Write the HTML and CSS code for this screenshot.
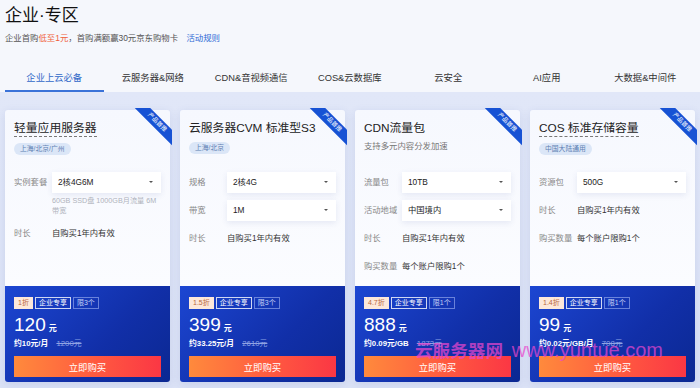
FILE: index.html
```html
<!DOCTYPE html>
<html lang="zh-CN">
<head>
  <meta charset="UTF-8" />
  <title>企业·专区</title>
  <link rel="stylesheet" href="styles.css">
</head>
<body>
  <header class="head">
    <h1>企业·专区</h1>
    <p class="sub">企业首购<em>低至1元</em>，首购满额赢30元京东购物卡 <a href="#">活动规则</a></p>
  </header>

  <nav class="tabs">
    <span class="tab active">企业上云必备</span>
    <span class="tab">云服务器&amp;网络</span>
    <span class="tab">CDN&amp;音视频通信</span>
    <span class="tab">COS&amp;云数据库</span>
    <span class="tab">云安全</span>
    <span class="tab">AI应用</span>
    <span class="tab">大数据&amp;中间件</span>
  </nav>

  <section class="cards">
    <div class="card">
      <div class="ribbon"><span>产品首推</span></div>
      <div class="card-top">
        <div class="card-head">
          <h2 class="dashed">轻量应用服务器</h2>
          <div><span class="region">上海/北京/广州</span></div>
        </div>
        <div class="row">
          <span class="label">实例套餐</span>
          <div class="control">
            <div class="select">2核4G6M</div>
            <p class="desc">60GB SSD盘 1000GB月流量 6M 带宽</p>
          </div>
        </div>
        <div class="row">
          <span class="label">时长</span>
          <span class="value">自购买1年内有效</span>
        </div>
      </div>
      <div class="card-bottom">
        <div class="badges"><span class="off">1折</span><span class="excl">企业专享</span><span class="limit">限3个</span></div>
        <div class="price">120<small>元</small></div>
        <div class="per">约10元/月 <s>1200元</s></div>
        <button class="buy">立即购买</button>
      </div>
    </div>

    <div class="card">
      <div class="ribbon"><span>产品首推</span></div>
      <div class="card-top">
        <div class="card-head">
          <h2>云服务器CVM 标准型S3</h2>
          <div><span class="region">上海/北京</span></div>
        </div>
        <div class="row">
          <span class="label">规格</span>
          <div class="control"><div class="select">2核4G</div></div>
        </div>
        <div class="row">
          <span class="label">带宽</span>
          <div class="control"><div class="select">1M</div></div>
        </div>
        <div class="row">
          <span class="label">时长</span>
          <span class="value">自购买1年内有效</span>
        </div>
      </div>
      <div class="card-bottom">
        <div class="badges"><span class="off">1.5折</span><span class="excl">企业专享</span><span class="limit">限3个</span></div>
        <div class="price">399<small>元</small></div>
        <div class="per">约33.25元/月 <s>2610元</s></div>
        <button class="buy">立即购买</button>
      </div>
    </div>

    <div class="card">
      <div class="ribbon"><span>产品首推</span></div>
      <div class="card-top">
        <div class="card-head">
          <h2>CDN流量包</h2>
          <p class="note">支持多元内容分发加速</p>
        </div>
        <div class="row">
          <span class="label">流量包</span>
          <div class="control"><div class="select">10TB</div></div>
        </div>
        <div class="row">
          <span class="label">活动地域</span>
          <div class="control"><div class="select">中国境内</div></div>
        </div>
        <div class="row">
          <span class="label">时长</span>
          <span class="value">自购买1年内有效</span>
        </div>
        <div class="row">
          <span class="label">购买数量</span>
          <span class="value">每个账户限购1个</span>
        </div>
      </div>
      <div class="card-bottom">
        <div class="badges"><span class="off">4.7折</span><span class="excl">企业专享</span><span class="limit">限1个</span></div>
        <div class="price">888<small>元</small></div>
        <div class="per">约0.09元/GB <s>1873元</s></div>
        <button class="buy">立即购买</button>
      </div>
    </div>

    <div class="card">
      <div class="ribbon"><span>产品首推</span></div>
      <div class="card-top">
        <div class="card-head">
          <h2 class="dashed">COS 标准存储容量</h2>
          <div><span class="region">中国大陆通用</span></div>
        </div>
        <div class="row">
          <span class="label">资源包</span>
          <div class="control"><div class="select">500G</div></div>
        </div>
        <div class="row">
          <span class="label">时长</span>
          <span class="value">自购买1年内有效</span>
        </div>
        <div class="row">
          <span class="label">购买数量</span>
          <span class="value">每个账户限购1个</span>
        </div>
      </div>
      <div class="card-bottom">
        <div class="badges"><span class="off">1.4折</span><span class="excl">企业专享</span><span class="limit">限1个</span></div>
        <div class="price">99<small>元</small></div>
        <div class="per">约0.02元/GB/月 <s>708元</s></div>
        <button class="buy">立即购买</button>
      </div>
    </div>
  </section>

  <div class="watermark">云服务器网 <span>www.yuntue.com</span></div>
</body>
</html>
```

FILE: styles.css
```css
body {
  margin: 0;
  height: 388px;
  overflow: hidden;
  background: #f5f7fc;
  color: #222;
  font-family: "Liberation Sans", "Noto Sans CJK SC", sans-serif;
  position: relative;
}
.head {
  padding: 0 5px;
}
h1 {
  margin: 0;
  padding-top: 6px;
  font-size: 17px;
  line-height: 20px;
  font-weight: normal;
  color: #111;
}
.sub {
  margin: 6px 0 0;
  font-size: 8.4px;
  line-height: 12px;
  color: #555;
}
.sub em {
  font-style: normal;
  color: #f0603a;
}
.sub a {
  margin-left: 6px;
  color: #2d6ad6;
  text-decoration: none;
}
.tabs {
  display: flex;
  margin-top: 22px;
  padding-left: 5px;
}
.tab {
  flex: 0 0 98.5px;
  text-align: center;
  font-size: 9.3px;
  line-height: 12px;
  padding: 6px 0;
  color: #333;
  border-bottom: 2px solid transparent;
}
.tab.active {
  color: #2f68c8;
  border-bottom-color: #3a72d8;
}
.cards {
  display: flex;
  gap: 10px;
  padding: 18px 5px 0;
  height: 296px;
  box-sizing: border-box;
  background: linear-gradient(180deg, #e1e7f8 0%, #dbe2f6 100%);
}
.card {
  position: relative;
  width: 165px;
  height: 272px;
  display: flex;
  flex-direction: column;
  border-radius: 3px;
  box-shadow: 0 2px 8px rgba(60, 80, 160, 0.12);
}
.card-top {
  flex: 1;
  padding: 0 9px;
  background: linear-gradient(180deg, #f6f8fe 0%, #fbfcff 100%);
  border-radius: 3px 3px 0 0;
}
.card-head {
  height: 62px;
  padding-top: 8px;
  box-sizing: border-box;
}
h2 {
  display: inline-block;
  margin: 0;
  font-size: 11.8px;
  line-height: 16px;
  font-weight: normal;
  color: #222;
}
h2.dashed {
  border-bottom: 1px dashed #777;
}
.region {
  display: inline-block;
  margin-top: 6px;
  padding: 0 6px;
  height: 12px;
  line-height: 12px;
  border-radius: 6px;
  background: #dbe6f7;
  color: #5d7fb3;
  font-size: 6.8px;
}
.note {
  margin: 4px 0 0;
  font-size: 8.4px;
  line-height: 12px;
  color: #777;
}
.row {
  display: flex;
  align-items: flex-start;
  margin-bottom: 7px;
  font-size: 8.3px;
  line-height: 21px;
}
.label {
  flex: 0 0 38px;
  color: #888;
  white-space: nowrap;
}
.value {
  color: #333;
}
.control {
  flex: 1;
}
.select {
  position: relative;
  height: 21px;
  padding-left: 6px;
  background: #fff;
  color: #222;
  box-shadow: 0 2px 6px rgba(50, 70, 150, 0.1);
}
.select::after {
  content: "";
  position: absolute;
  right: 8px;
  top: 9px;
  border: 2.5px solid transparent;
  border-top-color: #555;
}
.desc {
  margin: 3px 0 0;
  font-size: 7.2px;
  line-height: 10px;
  color: #b0b4bd;
}
.card-bottom {
  height: 96px;
  box-sizing: border-box;
  padding: 11px 9px 9px;
  background: linear-gradient(135deg, #1c46d2 0%, #112fa8 60%, #0b2892 100%);
  border-radius: 0 0 3px 3px;
  color: #fff;
}
.badges {
  display: flex;
  gap: 2px;
  height: 12px;
}
.badges span {
  box-sizing: border-box;
  height: 12px;
  line-height: 10px;
  padding: 0 3px;
  font-size: 7px;
  border: 1px solid rgba(255, 255, 255, 0.8);
}
.badges .off {
  background: #fde8da;
  border-color: #fde8da;
  color: #b9663a;
}
.badges .limit {
  border-color: rgba(190, 205, 255, 0.5);
  color: #c3cff5;
}
.price {
  margin-top: 6px;
  font-size: 19px;
  line-height: 20px;
}
.price small {
  margin-left: 3px;
  font-size: 8px;
  font-weight: bold;
}
.per {
  font-size: 7.8px;
  line-height: 10px;
  font-weight: bold;
}
.per s {
  margin-left: 6px;
  font-weight: normal;
  color: #8fa2e4;
}
.buy {
  display: block;
  width: 100%;
  height: 21px;
  margin-top: 7px;
  border: none;
  padding: 0;
  background: linear-gradient(90deg, #ff8a3c 0%, #ff5a40 55%, #fb3744 100%);
  color: #fff;
  font-family: inherit;
  font-size: 9.4px;
}
.ribbon {
  position: absolute;
  top: -2px;
  right: -2px;
  width: 40px;
  height: 40px;
  overflow: hidden;
}
.ribbon span {
  position: absolute;
  top: 9px;
  right: -15px;
  width: 60px;
  height: 11px;
  line-height: 11px;
  background: #1752d4;
  color: #fff;
  font-size: 6px;
  text-align: center;
  transform: rotate(45deg);
}
.watermark {
  position: absolute;
  left: 415px;
  top: 338px;
  font-size: 17.6px;
  line-height: 24px;
  font-weight: bold;
  color: rgba(234, 70, 205, 0.72);
  white-space: nowrap;
}
.watermark span {
  margin-left: 4px;
  font-size: 20px;
  font-weight: normal;
}
```
